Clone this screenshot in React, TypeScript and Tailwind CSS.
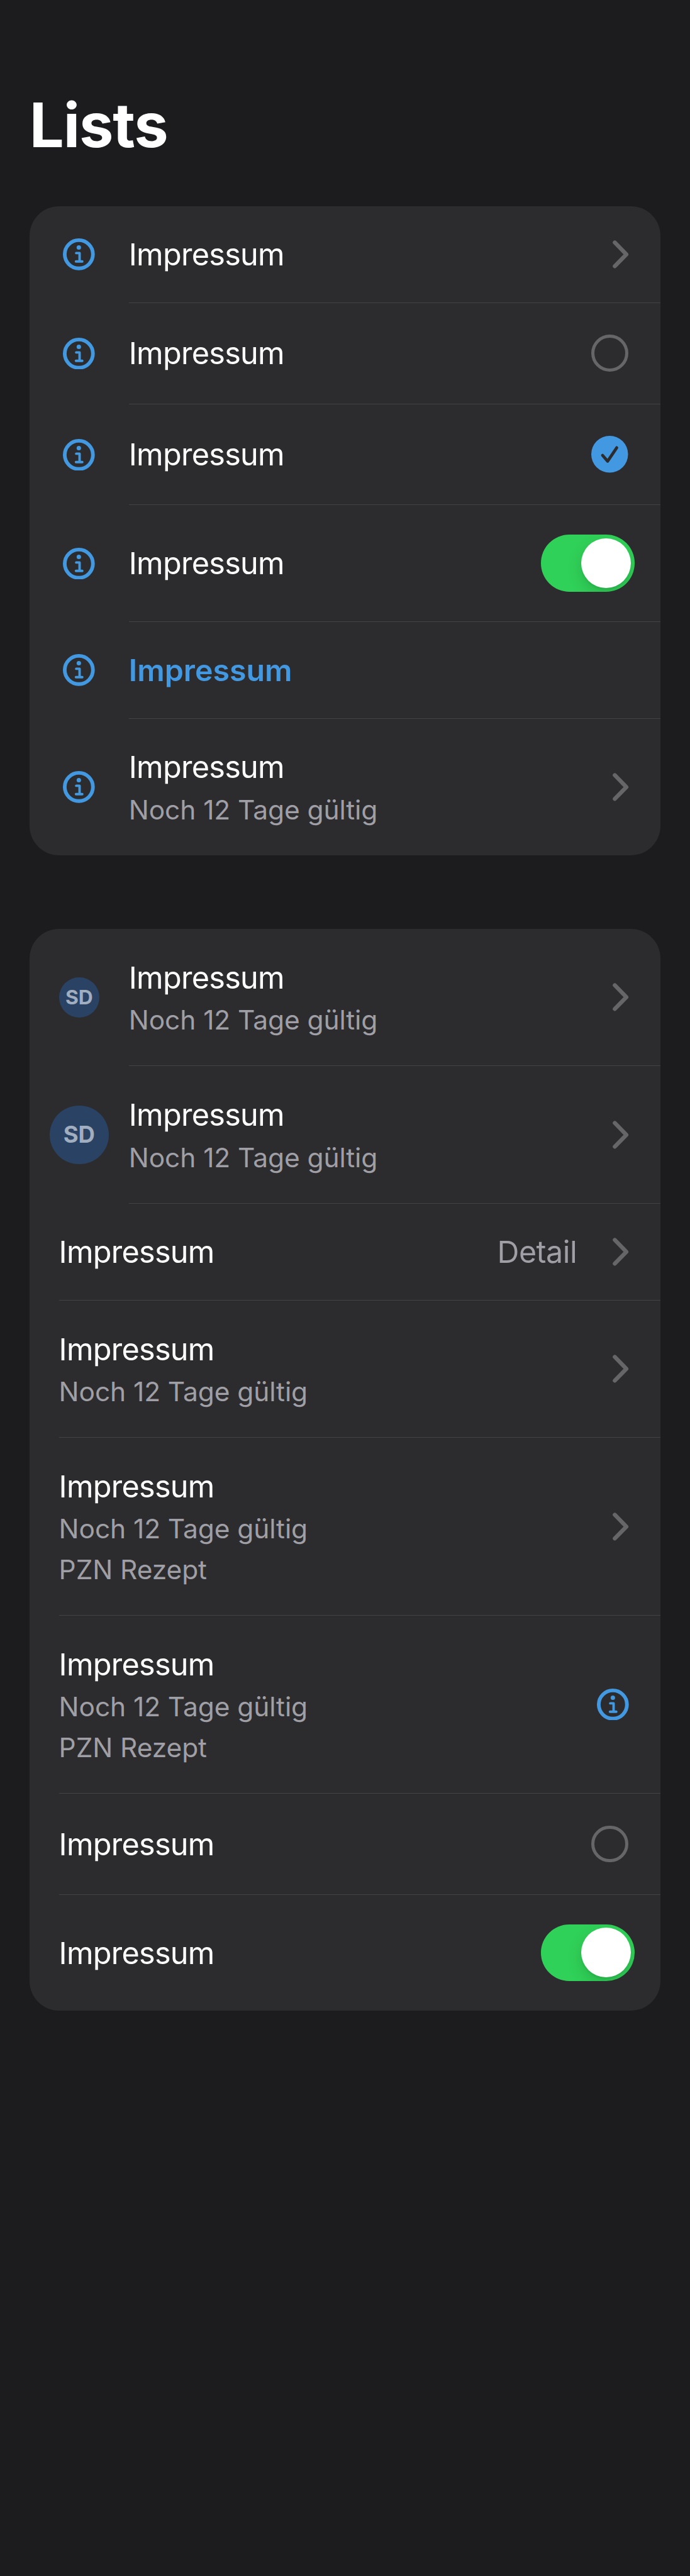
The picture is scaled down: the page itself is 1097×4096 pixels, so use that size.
import type { ReactNode } from "react";

function InfoIcon() {
  return (
    <svg viewBox="-26 -26 52 52" className="h-[50.7px] w-[50.7px] shrink-0" fill="none" stroke="#4299e1" strokeLinecap="round" strokeLinejoin="round">
      <circle r="23" strokeWidth="6" />
      <circle cx="0" cy="-11.2" r="3.6" fill="#4299e1" stroke="none" />
      <path d="M-4.3 -2H1.2V11.7M-4.7 11.7H5.6" strokeWidth="4" />
    </svg>
  );
}

function Chevron() {
  return (
    <svg viewBox="0 0 26 46" className="mr-[50.7px] h-[44.9px] w-[25.4px] shrink-0" fill="none">
      <path d="M3.5 3.7L22.4 23L3.5 42.3" stroke="#666669" strokeWidth="6.6" strokeLinecap="round" strokeLinejoin="round" />
    </svg>
  );
}

function Radio() {
  return <span className="mr-[51.7px] size-[58.5px] shrink-0 rounded-full border-[5px] border-[#666669]" />;
}

function Checked() {
  return (
    <svg viewBox="-30 -30 60 60" className="mr-[51.7px] size-[58.5px] shrink-0" fill="none">
      <circle r="30" fill="#4299e1" />
      <path d="M-11.6 1.8L-3.3 11.4L11.6 -10.7" stroke="#2c2c2e" strokeWidth="4.8" strokeLinecap="round" strokeLinejoin="round" />
    </svg>
  );
}

function Toggle() {
  return (
    <span className="mr-[41px] flex h-[90.7px] w-[149.2px] shrink-0 items-center justify-end overflow-hidden rounded-full bg-[#30d158] pr-[5.9px]">
      <span className="size-[79px] rounded-full bg-white shadow-[0_9px_24px_rgba(0,0,0,0.15),0_3px_3px_rgba(0,0,0,0.06)]" />
    </span>
  );
}

function Avatar({ large = false }: { large?: boolean }) {
  return (
    <span
      className={
        large
          ? "flex size-[93.6px] items-center justify-center rounded-full bg-[#2a4365] text-[36.5px] font-bold text-[#a0aec0]"
          : "flex size-[64.4px] items-center justify-center rounded-full bg-[#2a4365] text-[31.8px] font-bold text-[#a0aec0]"
      }
    >
      SD
    </span>
  );
}

type RowProps = {
  height: string;
  lead?: ReactNode;
  trail?: ReactNode;
  lines?: string[];
  detail?: string;
  action?: boolean;
  last?: boolean;
};

function Row({ height, lead, trail, lines = [], detail, action, last }: RowProps) {
  return (
    <li className={`flex ${height}`}>
      {lead ? <div className="flex w-[158px] shrink-0 items-center justify-center">{lead}</div> : <div className="w-[46.8px] shrink-0" />}
      <div className={`flex min-w-0 flex-1 items-center ${last ? "" : "border-b border-[#434346]"}`}>
        <div className={`min-w-0 flex-1 ${lines.length ? "pt-[6px]" : "pt-[2px]"}`}>
          <p className={action ? "text-[48.3px] leading-[64.4px] font-semibold text-[#4299e1]" : "text-[48.6px] leading-[64.4px] tracking-[-0.75px] text-white"}>Impressum</p>
          {lines.length > 0 && (
            <div className="pt-[3px] text-[42.5px] leading-[64.5px] tracking-[-0.1px] text-[#9f9fa5]">
              {lines.map((line) => (
                <p key={line}>{line}</p>
              ))}
            </div>
          )}
        </div>
        {detail && <span className="mr-[57px] pt-[2px] text-[48.3px] leading-[64.4px] tracking-[-0.5px] text-[#9f9fa5]">{detail}</span>}
        {trail}
      </div>
    </li>
  );
}

const NOTE = "Noch 12 Tage gültig";
const PZN = "PZN Rezept";

export default function App() {
  return (
    <main className="min-h-[4096px] w-full bg-[#1c1c1e] px-[46.8px] pt-[139.7px] font-['Inter',sans-serif]">
      <h1 className="mb-[69.9px] text-[97.3px] leading-[118px] font-bold tracking-[-1.1px] text-white">Lists</h1>

      <ul className="mb-[117px] rounded-[46.8px] bg-[#2c2c2e]">
        <Row height="h-[154.05px]" lead={<InfoIcon />} trail={<Chevron />} />
        <Row height="h-[160.9px]" lead={<InfoIcon />} trail={<Radio />} />
        <Row height="h-[160.9px]" lead={<InfoIcon />} trail={<Checked />} />
        <Row height="h-[185.25px]" lead={<InfoIcon />} trail={<Toggle />} />
        <Row height="h-[154.05px]" lead={<InfoIcon />} action />
        <Row height="h-[217.4px]" lead={<InfoIcon />} lines={[NOTE]} trail={<Chevron />} last />
      </ul>

      <ul className="rounded-[46.8px] bg-[#2c2c2e]">
        <Row height="h-[218.4px]" lead={<Avatar />} lines={[NOTE]} trail={<Chevron />} />
        <Row height="h-[218.4px]" lead={<Avatar large />} lines={[NOTE]} trail={<Chevron />} />
        <Row height="h-[154.05px]" detail="Detail" trail={<Chevron />} />
        <Row height="h-[218.4px]" lines={[NOTE]} trail={<Chevron />} />
        <Row height="h-[282.8px]" lines={[NOTE, PZN]} trail={<Chevron />} />
        <Row height="h-[282.8px]" lines={[NOTE, PZN]} trail={<span className="mr-[50.7px]"><InfoIcon /></span>} />
        <Row height="h-[160.9px]" trail={<Radio />} />
        <Row height="h-[184.3px]" trail={<Toggle />} last />
      </ul>
    </main>
  );
}
